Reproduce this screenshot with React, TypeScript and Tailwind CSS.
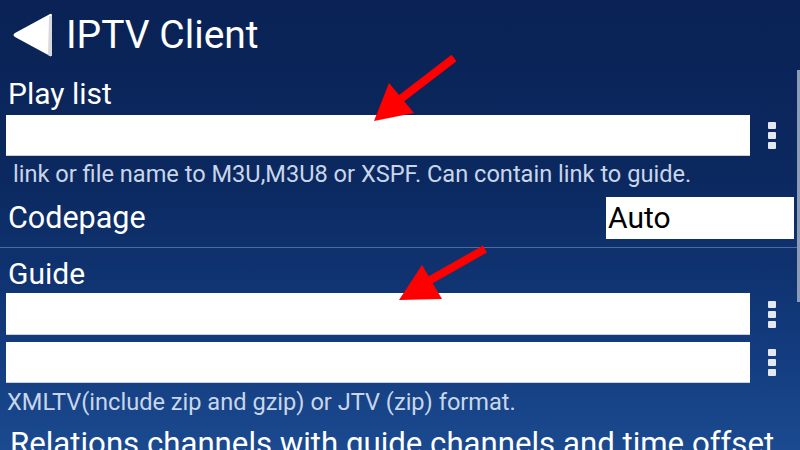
import React from "react";

const Dots = () => (
  <div className="flex w-[44px] flex-col items-center justify-center gap-[3px]">
    <div className="h-[7px] w-[8px] rounded-[1px] bg-[#e3e8f1]" />
    <div className="h-[7px] w-[8px] rounded-[1px] bg-[#e3e8f1]" />
    <div className="h-[7px] w-[8px] rounded-[1px] bg-[#e3e8f1]" />
  </div>
);

export default function App() {
  return (
    <div
      className="relative h-[450px] w-[800px] overflow-hidden bg-[linear-gradient(180deg,#0a2255_0%,#0b2960_40%,#123a7c_75%,#1b4a90_100%)] text-white"
      style={{ fontFamily: "Roboto, 'Noto Sans', sans-serif" }}
    >
      {/* header */}
      <div className="flex h-[75px] items-center">
        <svg width="44" height="50" viewBox="0 0 44 50" className="ml-[10px] mb-[5px]">
          <path d="M40 4 Q42 3 42 6 L42 44 Q42 47 40 46 L5 27 Q2 25 5 23 Z" fill="#ffffff" />
          <path d="M42 6 L42 44 Q42 47 40 46 L38 45 L39 6 Z" fill="#d7d9de" />
        </svg>
        <div className="ml-[12px] mb-[5px] text-[39px] leading-[44px]">IPTV Client</div>
      </div>

      {/* Play list */}
      <div className="h-[40px] pl-[8px] text-[30px] leading-[38px]">Play list</div>
      <div className="flex h-[41px] pl-[6px] pr-[6px]">
        <div className="flex-1 border-b border-[#c9ced8] bg-white" />
        <Dots />
      </div>
      <div className="mt-[4px] h-[37px] whitespace-nowrap pl-[13px] text-[23.6px] leading-[28px] text-[#c9d6ea]">
        link or file name to M3U,M3U8 or XSPF. Can contain link to guide.
      </div>

      {/* Codepage */}
      <div className="flex h-[42px] items-center justify-between pl-[8px] pr-[6px]">
        <div className="text-[30.5px] leading-[38px]">Codepage</div>
        <div className="flex h-[42px] w-[188px] items-center bg-white pl-[2px] text-[30px] leading-[38px] text-black">
          Auto
        </div>
      </div>
      <div className="mt-[8px] h-[1px] bg-[#4a6ca3]" />

      {/* Guide */}
      <div className="mt-[7px] h-[38px] pl-[8px] text-[30px] leading-[38px]">Guide</div>
      <div className="flex h-[42px] pl-[6px] pr-[6px]">
        <div className="flex-1 border-b border-[#c9ced8] bg-white" />
        <Dots />
      </div>
      <div className="mt-[7px] flex h-[41px] pl-[6px] pr-[6px]">
        <div className="flex-1 border-b border-[#c9ced8] bg-white" />
        <Dots />
      </div>
      <div className="mt-[5px] h-[37px] whitespace-nowrap pl-[7px] text-[23.6px] leading-[28px] text-[#c9d6ea]">
        XMLTV(include zip and gzip) or JTV (zip) format.
      </div>
      <div className="whitespace-nowrap pl-[10px] text-[31.2px] leading-[38px]">
        Relations channels with guide channels and time offset
      </div>

      {/* scrollbar */}
      <div className="absolute right-0 top-[70px] h-[232px] w-[3px] bg-[#8d9cb6]" />

      {/* red arrows */}
      <svg className="pointer-events-none absolute left-0 top-0" width="800" height="450">
        <line x1="454" y1="58" x2="398" y2="101" stroke="#ff0000" strokeWidth="8" />
        <polygon points="374,121 389,83 414,113" fill="#ff0000" />
        <line x1="485" y1="249" x2="425" y2="283" stroke="#ff0000" strokeWidth="8" />
        <polygon points="399,300 422,265 442,299" fill="#ff0000" />
      </svg>
    </div>
  );
}
